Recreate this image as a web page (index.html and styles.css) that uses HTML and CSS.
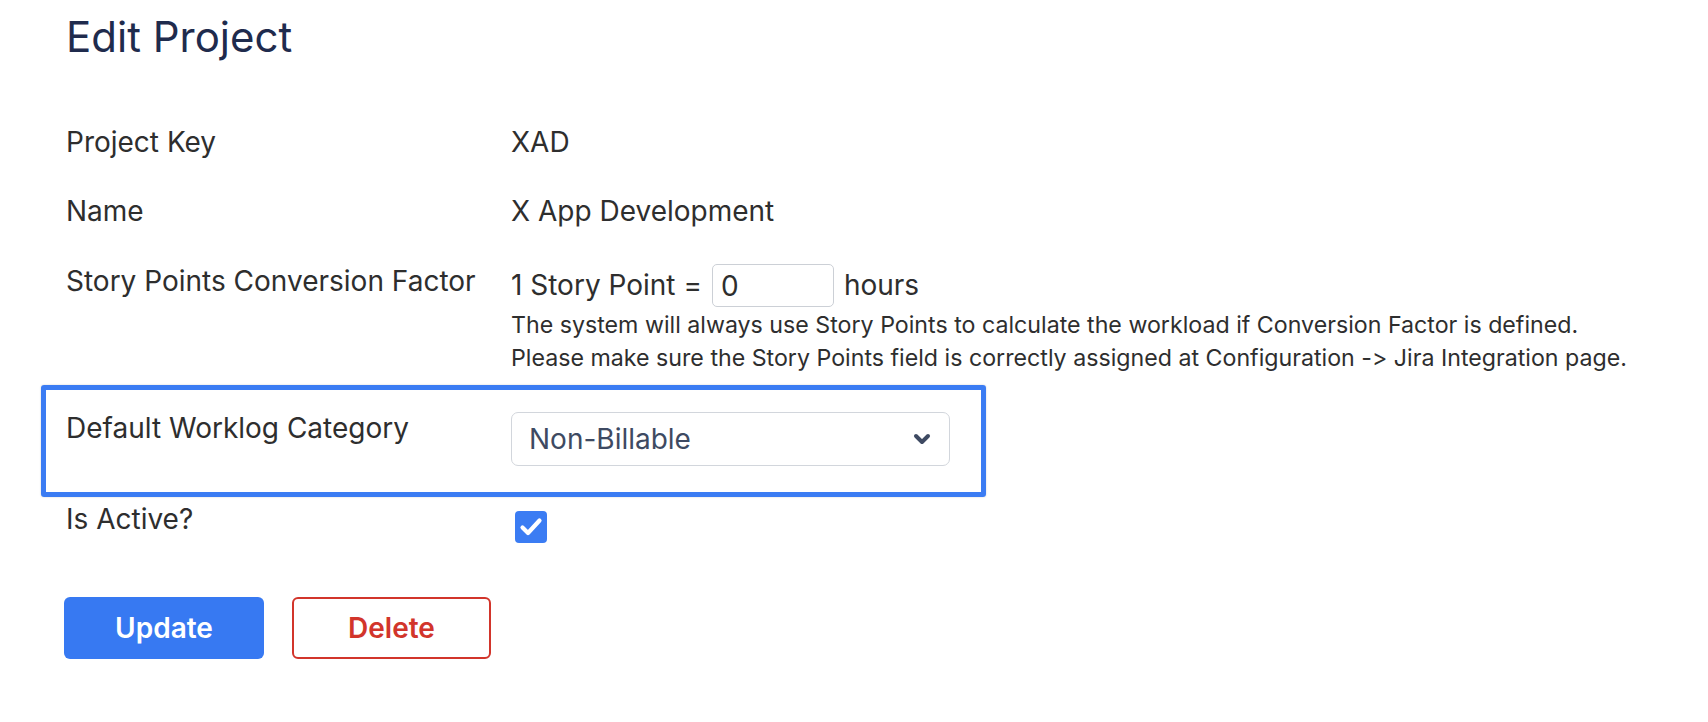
FILE: index.html
```html
<!DOCTYPE html>
<html lang="en">
<head>
<meta charset="utf-8">
<title>Edit Project</title>
<link rel="stylesheet" href="styles.css">
</head>
<body>
<main class="page">
  <h1 class="title">Edit Project</h1>
  <div class="form">
    <div class="row">
      <div class="label">Project Key</div>
      <div class="value">XAD</div>
    </div>
    <div class="row">
      <div class="label">Name</div>
      <div class="value">X App Development</div>
    </div>
    <div class="row row-story">
      <div class="label">Story Points Conversion Factor</div>
      <div class="value">
        <div class="conv">
          <span>1 Story Point =</span>
          <input class="num" type="text" value="0">
          <span>hours</span>
        </div>
        <p class="help">The system will always use Story Points to calculate the workload if Conversion Factor is defined.</p>
        <p class="help">Please make sure the Story Points field is correctly assigned at Configuration -&gt; Jira Integration page.</p>
      </div>
    </div>
    <div class="row row-highlight">
      <div class="label">Default Worklog Category</div>
      <div class="value">
        <div class="select">
          <span>Non-Billable</span>
          <svg class="chev" width="18" height="12" viewBox="0 0 18 12"><polyline points="3,3 9,9 15,3" fill="none" stroke="#3e4a62" stroke-width="4" stroke-linecap="round" stroke-linejoin="round"/></svg>
        </div>
      </div>
    </div>
    <div class="row row-active">
      <div class="label">Is Active?</div>
      <div class="value">
        <span class="check"><svg width="24" height="20" viewBox="0 0 24 20"><polyline points="3.5,10.5 9,16 20.5,3.5" fill="none" stroke="#fff" stroke-width="4.2" stroke-linecap="round" stroke-linejoin="round"/></svg></span>
      </div>
    </div>
  </div>
  <div class="actions">
    <button class="btn btn-primary" type="button">Update</button>
    <button class="btn btn-danger" type="button">Delete</button>
  </div>
</main>
</body>
</html>
```
FILE: styles.css
```css
* { box-sizing: border-box; }
body {
  margin: 0;
  background: #ffffff;
  font-family: Inter, "Noto Sans", sans-serif;
  font-feature-settings: "calt" 0;
  color: #2e2e2e;
}
.page {
  padding: 12px 0 0 66px;
}
.title {
  margin: 0;
  font-size: 42px;
  line-height: 50px;
  font-weight: 400;
  color: #1f2b4d;
}
.form {
  margin-top: 46px;
}
.row {
  display: grid;
  grid-template-columns: 445px 1fr;
  padding: 15px 0;
  font-size: 28px;
  line-height: 39px;
}
.row-story {
  padding: 16px 0 0;
}
.conv {
  display: flex;
  align-items: center;
  gap: 10px;
  height: 47px;
}
.num {
  width: 122px;
  height: 43px;
  border: 1.5px solid #ccd0d6;
  border-radius: 5px;
  padding: 0 8px;
  font-family: inherit;
  font-size: 28px;
  color: #2e2e2e;
  outline: none;
}
.help {
  margin: 0;
  font-size: 23.2px;
  line-height: 33px;
}
.row-highlight {
  margin-top: 10px;
  margin-left: -25px;
  width: 945px;
  border: 5px solid #3b7cf3;
  border-radius: 3px;
  padding: 19px 0 26px 20px;
  box-shadow: 0 0 2px rgba(0, 0, 0, 0.2);
}
.select {
  margin-top: 3px;
  width: 439px;
  height: 54px;
  border: 1.5px solid #d2d6dc;
  border-radius: 7px;
  padding: 0 18px 0 17px;
  display: flex;
  align-items: center;
  justify-content: space-between;
  color: #3e4a62;
  font-size: 28px;
}
.row-active {
  padding: 3px 0 0;
}
.check {
  margin-top: 11px;
  margin-left: 4px;
  width: 32px;
  height: 32px;
  border-radius: 4px;
  background: #3b7cf3;
  display: flex;
  align-items: center;
  justify-content: center;
}
.actions {
  margin-top: 54px;
  display: flex;
  gap: 28px;
  margin-left: -2px;
}
.btn {
  height: 62px;
  border-radius: 6px;
  font-family: inherit;
  font-size: 28px;
  font-weight: 600;
  cursor: pointer;
}
.btn-primary {
  width: 200px;
  background: #3779f2;
  border: none;
  color: #ffffff;
}
.btn-danger {
  width: 199px;
  background: #ffffff;
  border: 2px solid #d2352b;
  color: #d2352b;
}
```
